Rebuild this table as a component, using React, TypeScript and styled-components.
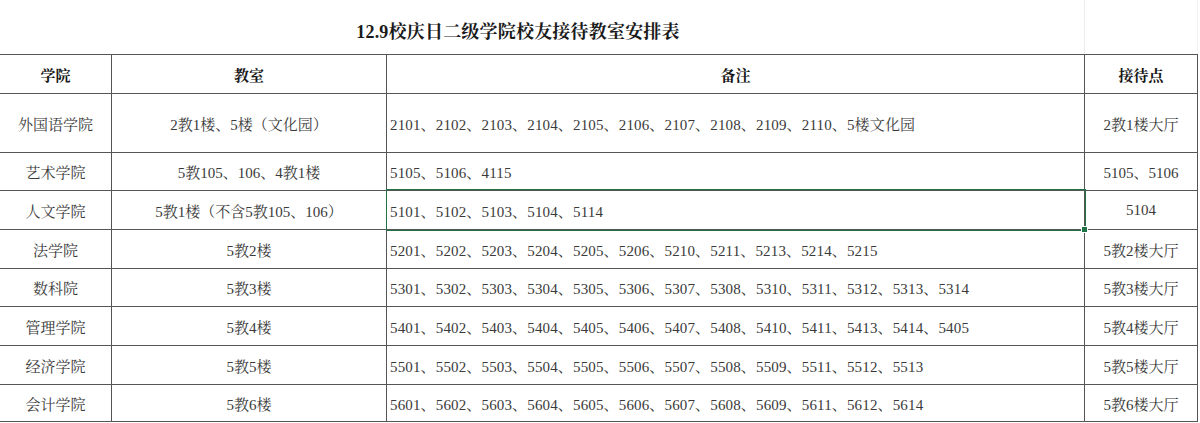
import React from "react";
import styled, { createGlobalStyle } from "styled-components";

const GlobalStyle = createGlobalStyle`
  html, body { margin: 0; padding: 0; background: #ffffff; }
  body {
    font-family: "Liberation Serif", "Noto Serif CJK SC", "Noto Sans CJK SC", serif;
    color: #2e2e2e;
  }
`;

const COLS = "112px 275px 698px 113px";
const LINE = "#555555";

const Sheet = styled.div`
  width: 1200px;
  height: 423px;
  overflow: hidden;
  background: #fff;
`;

const TitleBar = styled.div`
  display: grid;
  grid-template-columns: 1085px 113px;
  height: 54px;
`;

const TitleCell = styled.div`
  display: flex;
  align-items: center;
  justify-content: center;
  padding: 6px 48px 0 0;
  border-right: 1px solid #ececec;
  font-size: 18px;
  font-weight: 700;
  color: #1a1a1a;
  letter-spacing: 0.2px;
`;

const BlankCell = styled.div`
  border-right: 1px solid #f2f2f2;
`;

const Table = styled.div`
  display: flex;
  flex-direction: column;
  width: 1198px;
  border-top: 1px solid ${LINE};
`;

const Row = styled.div<{ $h: number }>`
  display: grid;
  grid-template-columns: ${COLS};
  height: ${(p) => p.$h}px;
  box-sizing: border-box;
  border-bottom: 1px solid ${LINE};
`;

const Cell = styled.div<{ $align?: "left" | "center"; $head?: boolean; $selected?: boolean }>`
  position: relative;
  display: flex;
  align-items: center;
  justify-content: ${(p) => (p.$align === "left" ? "flex-start" : "center")};
  padding: ${(p) => (p.$align === "left" ? "0 0 0 3px" : "0")};
  border-right: 1px solid ${LINE};
  font-size: 15px;
  font-weight: ${(p) => (p.$head ? 700 : 400)};
  color: ${(p) => (p.$head ? "#161616" : "#3a3a3a")};
  letter-spacing: ${(p) => (p.$align === "left" ? "0.15px" : "0")};
  white-space: nowrap;
  overflow: visible;

  ${(p) =>
    p.$selected &&
    `
    &::after {
      content: "";
      position: absolute;
      left: -1px;
      top: -2px;
      right: -2px;
      bottom: -2px;
      border: 1.5px solid #217346;
      pointer-events: none;
    }
    &::before {
      content: "";
      position: absolute;
      right: -4px;
      bottom: -4px;
      width: 5px;
      height: 5px;
      background: #217346;
      border: 1px solid #ffffff;
      z-index: 2;
    }
  `}
`;

type RowData = {
  college: string;
  room: string;
  note: string;
  point: string;
  h: number;
  selected?: boolean;
};

const rows: RowData[] = [
  {
    college: "外国语学院",
    room: "2教1楼、5楼（文化园）",
    note: "2101、2102、2103、2104、2105、2106、2107、2108、2109、2110、5楼文化园",
    point: "2教1楼大厅",
    h: 59,
  },
  { college: "艺术学院", room: "5教105、106、4教1楼", note: "5105、5106、4115", point: "5105、5106", h: 38 },
  {
    college: "人文学院",
    room: "5教1楼（不含5教105、106）",
    note: "5101、5102、5103、5104、5114",
    point: "5104",
    h: 39,
    selected: true,
  },
  {
    college: "法学院",
    room: "5教2楼",
    note: "5201、5202、5203、5204、5205、5206、5210、5211、5213、5214、5215",
    point: "5教2楼大厅",
    h: 39,
  },
  {
    college: "数科院",
    room: "5教3楼",
    note: "5301、5302、5303、5304、5305、5306、5307、5308、5310、5311、5312、5313、5314",
    point: "5教3楼大厅",
    h: 38,
  },
  {
    college: "管理学院",
    room: "5教4楼",
    note: "5401、5402、5403、5404、5405、5406、5407、5408、5410、5411、5413、5414、5405",
    point: "5教4楼大厅",
    h: 39,
  },
  {
    college: "经济学院",
    room: "5教5楼",
    note: "5501、5502、5503、5504、5505、5506、5507、5508、5509、5511、5512、5513",
    point: "5教5楼大厅",
    h: 39,
  },
  {
    college: "会计学院",
    room: "5教6楼",
    note: "5601、5602、5603、5604、5605、5606、5607、5608、5609、5611、5612、5614",
    point: "5教6楼大厅",
    h: 37,
  },
];

export default function App() {
  return (
    <>
      <GlobalStyle />
      <Sheet>
        <TitleBar>
          <TitleCell>12.9校庆日二级学院校友接待教室安排表</TitleCell>
          <BlankCell />
        </TitleBar>
        <Table>
          <Row $h={39}>
            <Cell $head>学院</Cell>
            <Cell $head>教室</Cell>
            <Cell $head>备注</Cell>
            <Cell $head>接待点</Cell>
          </Row>
          {rows.map((r) => (
            <Row key={r.college} $h={r.h}>
              <Cell>{r.college}</Cell>
              <Cell>{r.room}</Cell>
              <Cell $align="left" $selected={r.selected}>
                {r.note}
              </Cell>
              <Cell>{r.point}</Cell>
            </Row>
          ))}
        </Table>
      </Sheet>
    </>
  );
}
